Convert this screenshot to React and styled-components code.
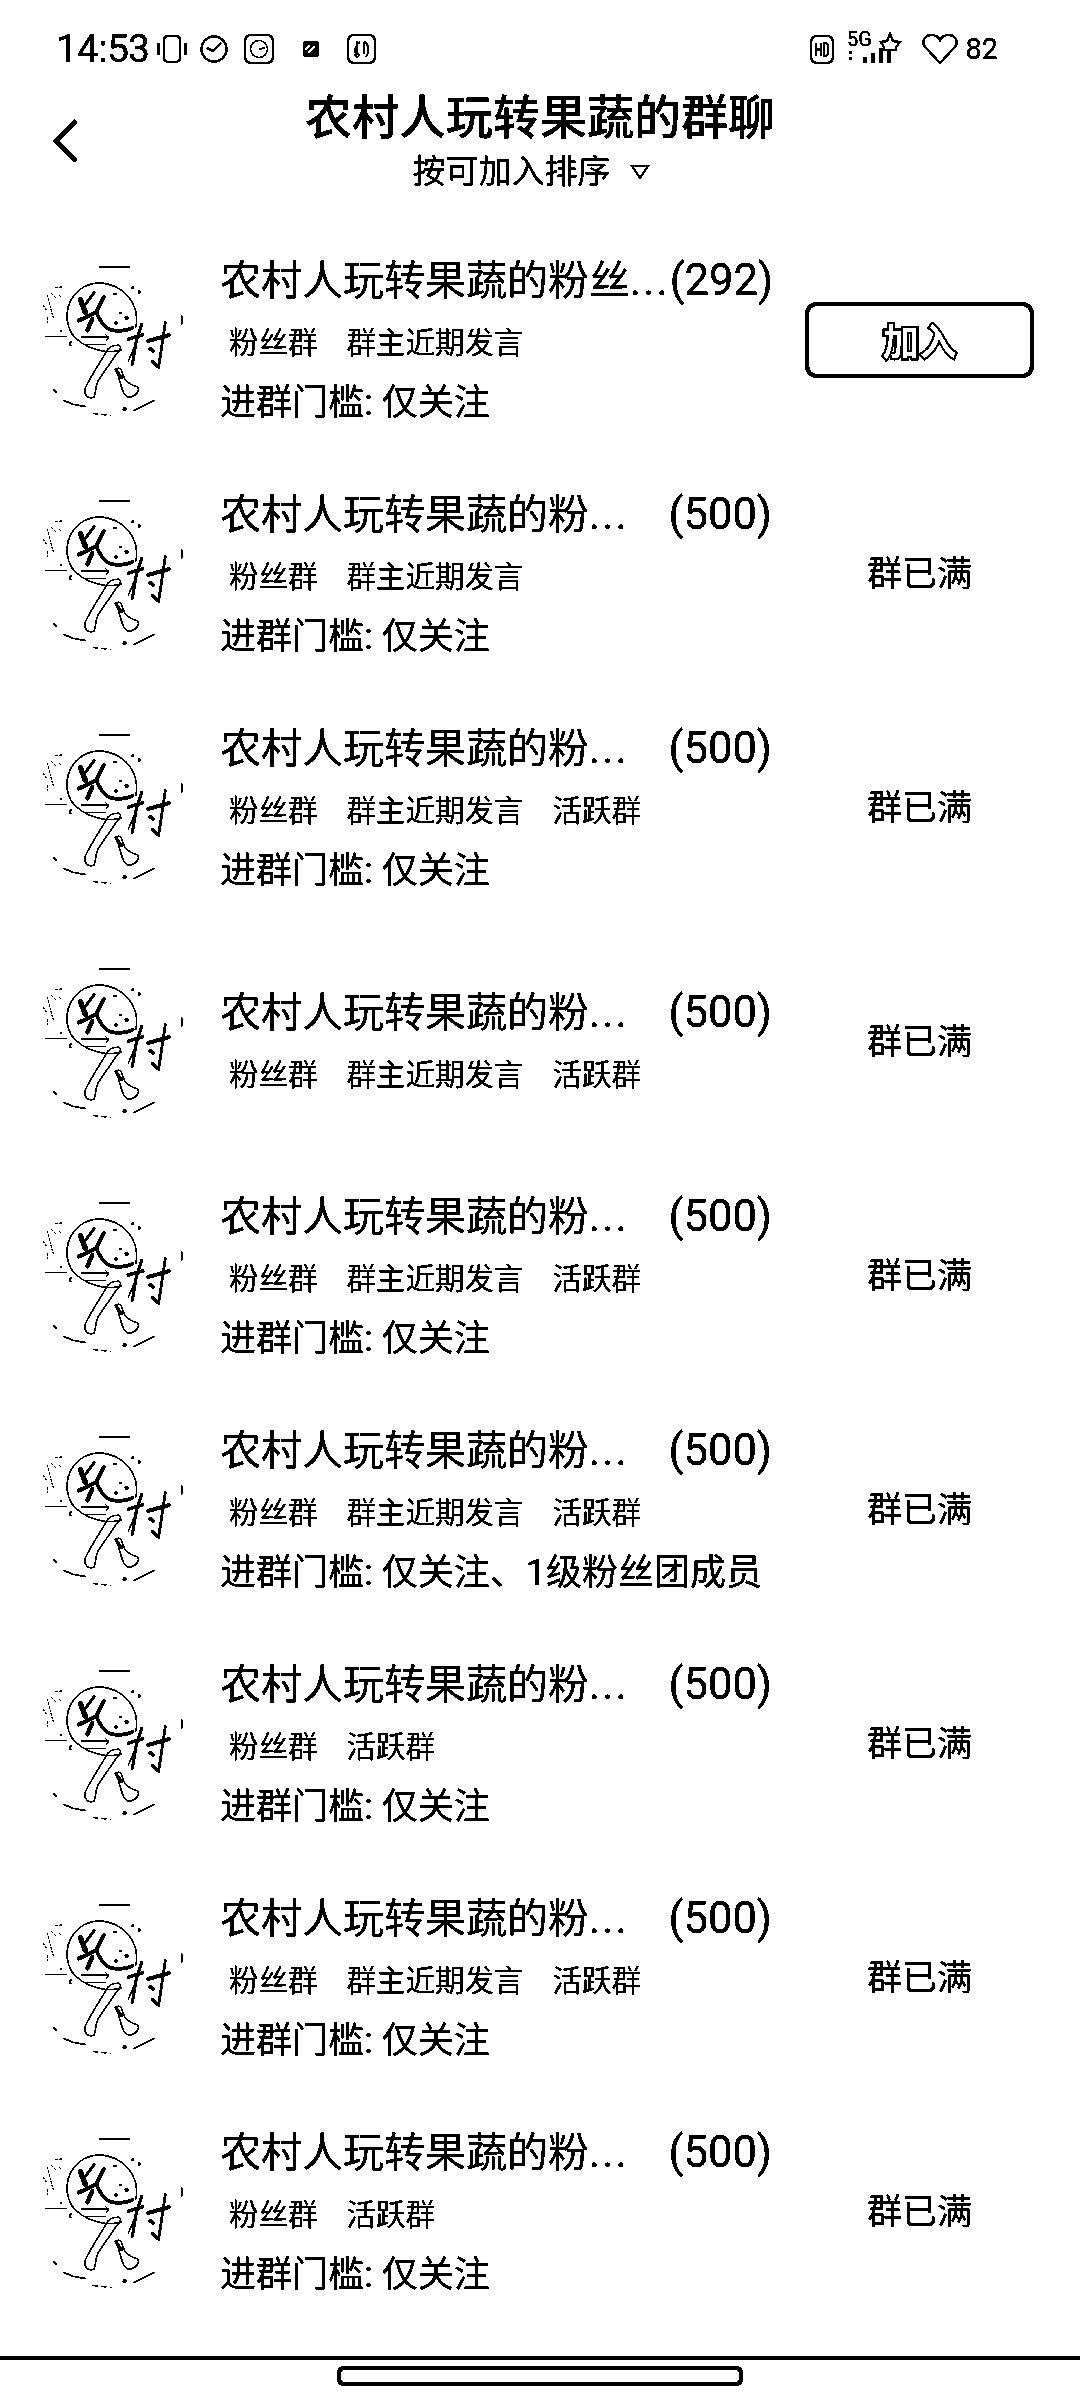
import React from "react";
import styled, { createGlobalStyle } from "styled-components";

const GlobalStyle = createGlobalStyle`
  html, body {
    margin: 0;
    padding: 0;
    background: #fff;
  }
  body {
    font-family: Roboto, "Noto Sans CJK SC", sans-serif;
    color: #000;
  }
`;

const Page = styled.div`
  width: 1080px;
  height: 2400px;
  background: #fff;
  overflow: hidden;
  display: flex;
  flex-direction: column;
  filter: url(#mono);
`;

const StatusBar = styled.div`
  height: 68px;
  margin-top: 15px;
  padding: 0 82px 0 56px;
  display: flex;
  align-items: center;
  justify-content: space-between;
`;

const StatusGroup = styled.div`
  display: flex;
  align-items: center;
`;

const Clock = styled.span`
  font-size: 39px;
  line-height: 1;
  letter-spacing: -0.8px;
  width: 92px;
  white-space: nowrap;
`;

const StatusIcon = styled.svg`
  display: block;
  flex: none;
  margin-left: ${(p) => p.$left || 0}px;
`;

const Battery = styled.span`
  font-size: 29px;
  line-height: 1;
  margin-left: 7px;
`;

const Header = styled.div`
  display: grid;
  grid-template-columns: 1fr auto 1fr;
  padding-bottom: 33px;
`;

const BackIcon = styled.svg`
  display: block;
  margin: 36px 0 0 52px;
`;

const TitleBlock = styled.div`
  display: flex;
  flex-direction: column;
  align-items: center;
`;

const Title = styled.h1`
  margin: 0;
  font-size: 47px;
  line-height: 70px;
  font-weight: 500;
  white-space: nowrap;
`;

const Sort = styled.div`
  display: flex;
  align-items: center;
  gap: 19px;
  padding-right: 18px;
  font-size: 33px;
  line-height: 38px;
`;

const List = styled.div`
  display: flex;
  flex-direction: column;
`;

const Row = styled.div`
  height: 234px;
  display: flex;
  align-items: center;
  padding-left: 20px;
`;

const Avatar = styled.svg`
  display: block;
  flex: none;
  width: 170px;
  height: 190px;
`;

const Info = styled.div`
  width: 552px;
  margin-left: 30px;
  display: flex;
  flex-direction: column;
`;

const NameLine = styled.div`
  display: flex;
  justify-content: space-between;
  align-items: baseline;
  font-size: 41px;
  line-height: 63px;
  white-space: nowrap;
`;

const Dots = styled.span`
  letter-spacing: 2.4px;
`;

const Count = styled.span`
  font-size: 43.5px;
`;

const Tags = styled.div`
  display: flex;
  gap: 11px;
  line-height: 60px;
  font-size: 29.5px;
`;

const Tag = styled.span`
  padding: 0 9px;
`;

const Threshold = styled.div`
  font-size: 36px;
  line-height: 60px;
  white-space: nowrap;
`;

const Action = styled.div`
  width: 229px;
  margin-left: 33px;
  display: flex;
  justify-content: center;
`;

const JoinButton = styled.button`
  width: 229px;
  height: 76px;
  margin-bottom: 3px;
  padding: 0;
  background: #fff;
  border: 4px solid #000;
  border-radius: 12px;
  font-family: inherit;
  font-size: 37px;
  font-weight: 700;
  color: #fff;
  -webkit-text-stroke: 3.6px #000;
  paint-order: stroke fill;
`;

const FullText = styled.span`
  font-size: 35px;
  line-height: 40px;
`;

const Footer = styled.div`
  margin-top: auto;
  height: 40px;
  border-top: 4px solid #000;
  display: flex;
  justify-content: center;
`;

const HomePill = styled.div`
  width: 406px;
  height: 20px;
  margin-top: 6px;
  box-sizing: border-box;
  border: 4px solid #000;
  border-radius: 7px;
`;

function VibrateIcon() {
  return (
    <StatusIcon $left={9} width="30" height="28" viewBox="0 0 30 28">
      <rect x="7" y="1" width="16" height="26" rx="4" fill="none" stroke="#000" strokeWidth="2" />
      <rect x="0" y="8" width="3" height="12" fill="#000" />
      <rect x="27" y="8" width="3" height="12" fill="#000" />
    </StatusIcon>
  );
}

function AlarmIcon() {
  return (
    <StatusIcon $left={13} width="28" height="28" viewBox="0 0 28 28">
      <circle cx="14" cy="14" r="12.5" fill="none" stroke="#000" strokeWidth="2" />
      <path d="M7 13 L13 16 L21 8" fill="none" stroke="#000" strokeWidth="2.4" />
    </StatusIcon>
  );
}

function AppClockIcon() {
  return (
    <StatusIcon $left={16} width="30" height="30" viewBox="0 0 30 30">
      <rect x="1" y="1" width="28" height="28" rx="6" fill="none" stroke="#000" strokeWidth="2" />
      <circle cx="15" cy="15" r="8.5" fill="none" stroke="#000" strokeWidth="1.2" />
      <path d="M15 15 L21 14" stroke="#000" strokeWidth="1.4" />
    </StatusIcon>
  );
}

function SlashIcon() {
  return (
    <StatusIcon $left={29} width="16" height="16" viewBox="0 0 16 16">
      <rect width="16" height="16" rx="3" fill="#000" />
      <path d="M2 9 L7 4 M5 12 L12 5" stroke="#fff" strokeWidth="2.4" />
    </StatusIcon>
  );
}

function AppLoopIcon() {
  return (
    <StatusIcon $left={28} width="29" height="30" viewBox="0 0 29 30">
      <rect x="1" y="1" width="27" height="28" rx="6" fill="none" stroke="#000" strokeWidth="2" />
      <path d="M10 7 V21 M13 8 C7 12 7 18 10 23 M18 7 C22 12 22 18 19 23 M17 8 V20" fill="none" stroke="#000" strokeWidth="1.5" />
      <circle cx="10" cy="21" r="2" fill="none" stroke="#000" />
    </StatusIcon>
  );
}

function HdIcon() {
  return (
    <StatusIcon width="24" height="29" viewBox="0 0 24 29">
      <rect x="1" y="1" width="22" height="27" rx="6" fill="none" stroke="#000" strokeWidth="2" />
      <path d="M6 8 V21 M11 8 V21 M6 14.5 H11" fill="none" stroke="#000" strokeWidth="1.8" />
      <path d="M14 8 H15.5 C19 8 19 21 15.5 21 H14 Z" fill="none" stroke="#000" strokeWidth="1.8" />
    </StatusIcon>
  );
}

function SignalIcon() {
  return (
    <StatusIcon $left={12} width="56" height="44" viewBox="0 -4 56 44">
      <text x="1" y="15" fontFamily="Roboto, sans-serif" fontSize="20">5G</text>
      <rect x="3" y="20" width="3" height="3" fill="#000" />
      <rect x="3" y="26" width="3" height="3" fill="#000" />
      <rect x="17" y="26" width="4" height="6" fill="#000" />
      <rect x="25" y="22" width="4" height="10" fill="#000" />
      <rect x="33" y="17" width="4" height="15" fill="#000" />
      <rect x="41" y="19" width="4" height="13" fill="#000" />
      <path d="M44 3 L47 10 L54 11 L50 16 L50 19 H38 L38 16 L35 11 L41 10 Z" fill="#fff" stroke="#000" strokeWidth="2" />
    </StatusIcon>
  );
}

function HeartIcon() {
  return (
    <StatusIcon $left={20} width="36" height="32" viewBox="0 0 36 32">
      <path
        d="M18 30 L3 14 C-1 8 3 2 9.5 2 C13.5 2 16.5 4 18 7.5 C19.5 4 22.5 2 26.5 2 C33 2 37 8 33 14 Z"
        fill="none"
        stroke="#000"
        strokeWidth="2"
      />
    </StatusIcon>
  );
}

function SortArrow() {
  return (
    <svg width="20" height="16" viewBox="0 0 20 16">
      <path d="M2 2 H18 L10 14 Z" fill="none" stroke="#000" strokeWidth="2" />
    </svg>
  );
}

function VillageLogo() {
  return (
    <Avatar viewBox="0 17 510 570">
      <g fill="none" stroke="#000" strokeLinecap="round" strokeLinejoin="round">
        <path d="M240 80 H327" strokeWidth="5" />
        <path d="M485 226 V252" strokeWidth="4" />
        <path d="M305 328 C262 345 190 325 155 280 C125 225 145 165 195 138 C255 110 325 145 345 205 C351 225 351 245 347 262" strokeWidth="3.5" />
        {/* brush strokes of the two characters */}
        <path d="M181 178 L196 216" strokeWidth="15" />
        <path d="M222 157 L192 198" strokeWidth="8" />
        <path d="M252 170 L228 216 L176 241" strokeWidth="11" />
        <path d="M217 236 L202 270" strokeWidth="12" />
        <path d="M230 218 C242 245 255 268 285 271 C305 272 325 268 338 262" strokeWidth="10" />
        <path d="M365 252 L350 296 L337 372" strokeWidth="8" />
        <path d="M325 296 L368 284" strokeWidth="10" />
        <path d="M352 300 L325 362" strokeWidth="3.5" />
        <path d="M384 302 L446 285" strokeWidth="11" />
        <path d="M436 246 L416 380" strokeWidth="7" />
        <path d="M398 364 L416 380" strokeWidth="10" />
        <path d="M390 325 L400 332" strokeWidth="10" />
        {/* hollow legs of the lower character */}
        <path d="M290 315 C305 312 305 325 290 340 L235 420 C225 440 228 460 222 470 C205 478 192 465 195 445 C205 420 250 350 265 325 C272 318 280 315 290 315 Z" strokeWidth="3.5" />
        <path d="M288 388 C295 378 305 385 308 400 C312 425 335 435 352 440 C362 450 345 472 325 470 C305 465 305 430 288 388 Z" strokeWidth="3.5" />
        <path d="M288 388 L305 412" strokeWidth="8" />
        {/* speed lines */}
        <path d="M78 288 H140" strokeWidth="3" />
        <path d="M185 290 H265 L258 284 M265 294 L258 300" strokeWidth="3" />
        <path d="M195 312 H255" strokeWidth="3" />
        <path d="M155 304 C147 308 147 314 155 316" strokeWidth="4" />
        {/* left flecks */}
        <path d="M70 195 L80 210 M82 165 L100 232 M95 160 L110 175 M108 142 L126 140 M118 165 L124 172 M82 232 V246 M120 272 H126" strokeWidth="3" strokeDasharray="5 6" />
        {/* bottom arc */}
        <path d="M100 447 L108 455" strokeWidth="4" />
        <path d="M130 480 L160 492 L195 498" strokeWidth="4" />
        <path d="M220 519 L272 525" strokeWidth="4" strokeDasharray="12 14" />
        <path d="M342 511 L404 480" strokeWidth="4" />
      </g>
      <g fill="#000">
        <rect x="280" y="158" width="10" height="5" />
        <circle cx="338" cy="142" r="4" />
        <circle cx="358" cy="155" r="5" />
        <circle cx="302" cy="218" r="4" />
        <circle cx="320" cy="232" r="6" />
        <circle cx="288" cy="248" r="5" />
        <circle cx="314" cy="507" r="6" />
      </g>
    </Avatar>
  );
}

const TITLE_LONG = "农村人玩转果蔬的粉丝";
const TITLE_SHORT = "农村人玩转果蔬的粉";
const TAGS_ALL = ["粉丝群", "群主近期发言", "活跃群"];
const TAGS_OWNER = ["粉丝群", "群主近期发言"];
const TAGS_ACTIVE = ["粉丝群", "活跃群"];

const groups = [
  { name: TITLE_LONG, count: 292, tags: TAGS_OWNER, rule: "仅关注", open: true },
  { name: TITLE_SHORT, count: 500, tags: TAGS_OWNER, rule: "仅关注" },
  { name: TITLE_SHORT, count: 500, tags: TAGS_ALL, rule: "仅关注" },
  { name: TITLE_SHORT, count: 500, tags: TAGS_ALL },
  { name: TITLE_SHORT, count: 500, tags: TAGS_ALL, rule: "仅关注" },
  { name: TITLE_SHORT, count: 500, tags: TAGS_ALL, rule: "仅关注、1级粉丝团成员" },
  { name: TITLE_SHORT, count: 500, tags: TAGS_ACTIVE, rule: "仅关注" },
  { name: TITLE_SHORT, count: 500, tags: TAGS_ALL, rule: "仅关注" },
  { name: TITLE_SHORT, count: 500, tags: TAGS_ACTIVE, rule: "仅关注" }
];

function GroupRow({ group }) {
  return (
    <Row>
      <VillageLogo />
      <Info>
        <NameLine>
          <span>
            {group.name}
            <Dots>...</Dots>
          </span>
          <Count>({group.count})</Count>
        </NameLine>
        <Tags>
          {group.tags.map((tag) => (
            <Tag key={tag}>{tag}</Tag>
          ))}
        </Tags>
        {group.rule && <Threshold>进群门槛: {group.rule}</Threshold>}
      </Info>
      <Action>
        {group.open ? <JoinButton>加入</JoinButton> : <FullText>群已满</FullText>}
      </Action>
    </Row>
  );
}

export default function App() {
  return (
    <>
      <GlobalStyle />
      {/* the reference is pure black and white, this drops the grey edge pixels */}
      <svg width="0" height="0" style={{ display: "block" }}>
        <filter id="mono" colorInterpolationFilters="sRGB">
          <feColorMatrix type="saturate" values="0" />
          <feComponentTransfer>
            <feFuncR type="discrete" tableValues="0 0 0 1" />
            <feFuncG type="discrete" tableValues="0 0 0 1" />
            <feFuncB type="discrete" tableValues="0 0 0 1" />
          </feComponentTransfer>
        </filter>
      </svg>
      <Page>
        <StatusBar>
          <StatusGroup>
            <Clock>14:53</Clock>
            <VibrateIcon />
            <AlarmIcon />
            <AppClockIcon />
            <SlashIcon />
            <AppLoopIcon />
          </StatusGroup>
          <StatusGroup>
            <HdIcon />
            <SignalIcon />
            <HeartIcon />
            <Battery>82</Battery>
          </StatusGroup>
        </StatusBar>
        <Header>
          <BackIcon width="27" height="44" viewBox="0 0 27 44">
            <path d="M24 2 L4 22 L24 42" fill="none" stroke="#000" strokeWidth="4" />
          </BackIcon>
          <TitleBlock>
            <Title>农村人玩转果蔬的群聊</Title>
            <Sort>
              按可加入排序
              <SortArrow />
            </Sort>
          </TitleBlock>
        </Header>
        <List>
          {groups.map((group, i) => (
            <GroupRow key={i} group={group} />
          ))}
        </List>
        <Footer>
          <HomePill />
        </Footer>
      </Page>
    </>
  );
}
